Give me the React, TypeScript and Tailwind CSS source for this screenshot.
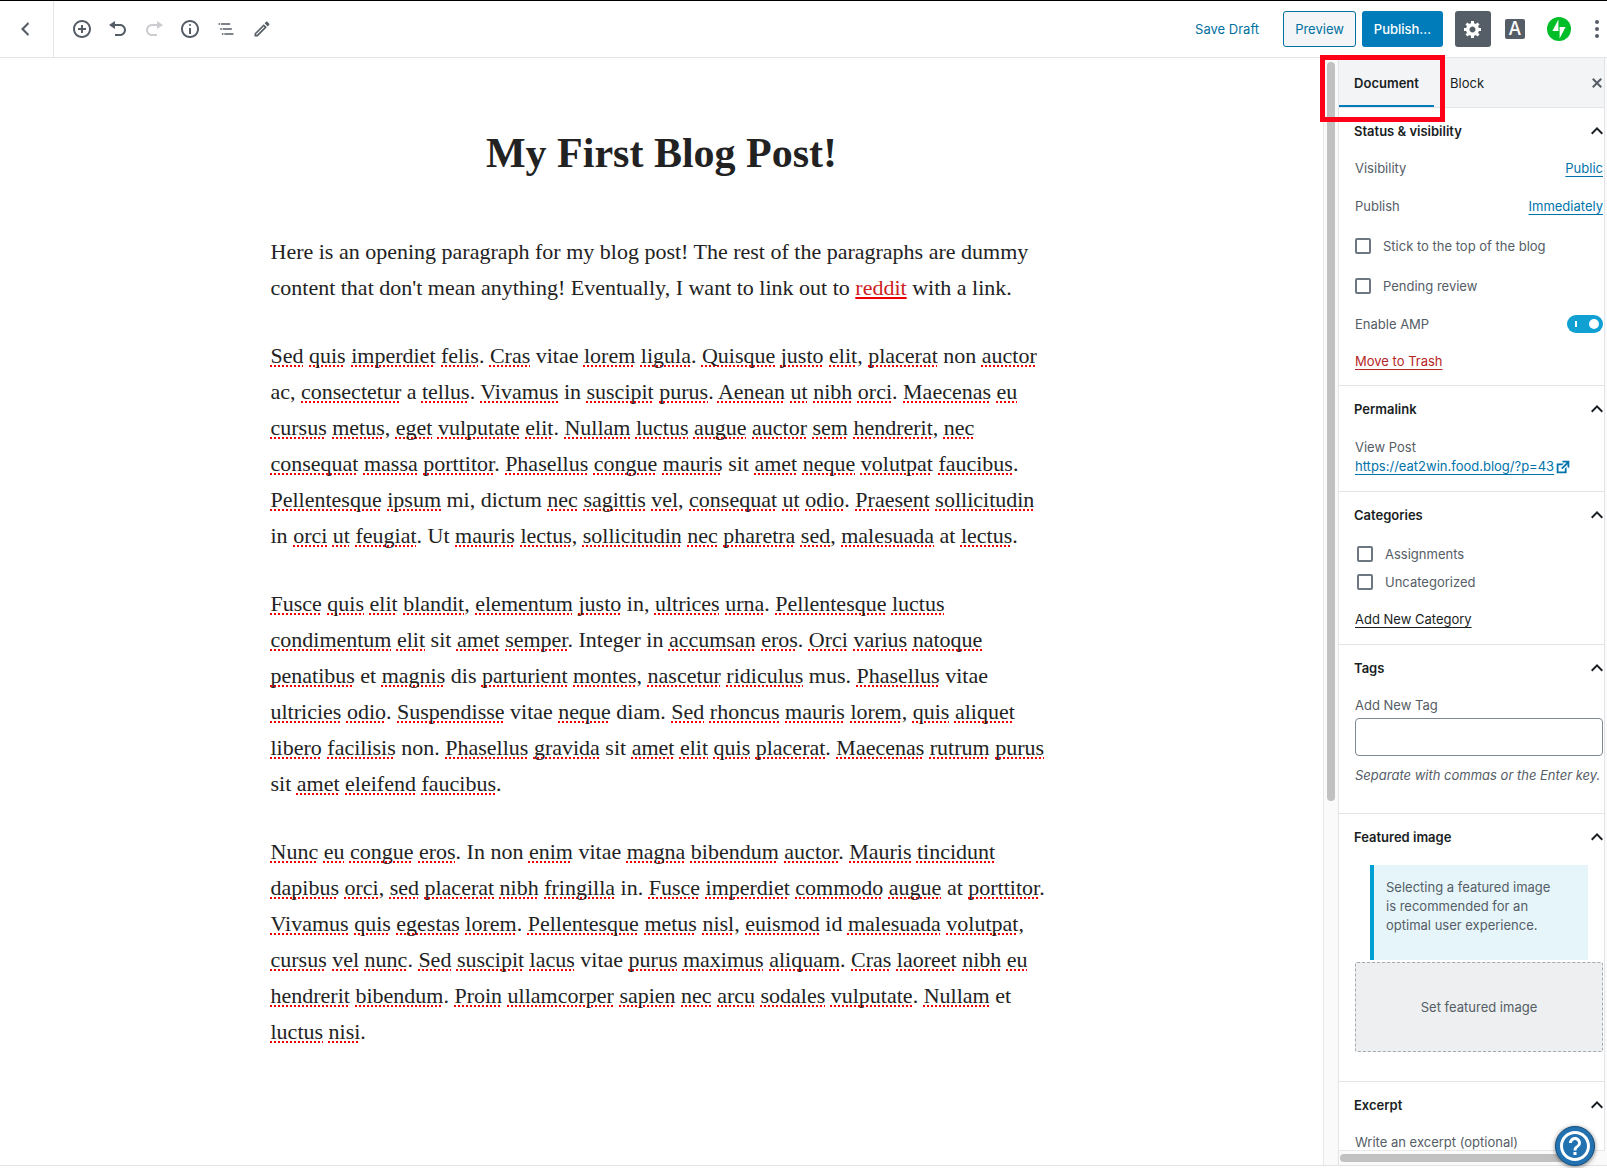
import React from "react";

const paths = {
  back: "M14 5l-5 5 5 5-1 2-7-7 7-7z",
  insert:
    "M10 1c-5 0-9 4-9 9s4 9 9 9 9-4 9-9-4-9-9-9zm0 16c-3.9 0-7-3.1-7-7s3.1-7 7-7 7 3.1 7 7-3.1 7-7 7zm1-11H9v3H6v2h3v3h2v-3h3V9h-3V6z",
  undo: "M12 5H7V2L1 6l6 4V7h5c2.2 0 4 1.8 4 4s-1.8 4-4 4H7v2h5c3.3 0 6-2.7 6-6s-2.7-6-6-6z",
  redo: "M8 5h5V2l6 4-6 4V7H8c-2.2 0-4 1.8-4 4s1.8 4 4 4h5v2H8c-3.3 0-6-2.7-6-6s2.7-6 6-6z",
  info: "M9 15h2V9H9v6zm1-10c-.5 0-1 .5-1 1s.5 1 1 1 1-.5 1-1-.5-1-1-1zm0-4c-5 0-9 4-9 9s4 9 9 9 9-4 9-9-4-9-9-9zm0 16c-3.9 0-7-3.1-7-7s3.1-7 7-7 7 3.1 7 7-3.1 7-7 7z",
  outline: "M5 5H3v2h2V5zm3 8h11v-2H8v2zm9-8H6v2h11V5zM7 11H5v2h2v-2zm0 8h2v-2H7v2zm3-2v2h11v-2H10z",
  edit: "M14.06 9.02l.92.92L5.92 19H5v-.92l9.06-9.06M17.66 3c-.25 0-.51.1-.7.29l-1.83 1.83 3.75 3.75 1.83-1.83c.39-.39.39-1.02 0-1.41l-2.34-2.34c-.2-.2-.45-.29-.71-.29zm-3.6 3.19L3 17.25V21h3.75L17.81 9.94l-3.75-3.75z",
  gear: "M18 12h-2.18c-.17.7-.44 1.35-.81 1.93l1.54 1.54-2.1 2.1-1.54-1.54c-.58.36-1.23.63-1.91.79V19H8v-2.18c-.68-.16-1.33-.43-1.91-.79l-1.54 1.54-2.12-2.12 1.54-1.54c-.36-.58-.63-1.23-.79-1.91H1V9.03h2.17c.16-.7.44-1.35.8-1.94L2.43 5.55l2.1-2.1 1.54 1.54c.58-.37 1.24-.64 1.93-.81V2h3v2.18c.68.16 1.33.43 1.91.79l1.54-1.54 2.12 2.12-1.54 1.54c.36.59.64 1.24.8 1.94H18V12zm-8.5 1.5c1.66 0 3-1.34 3-3s-1.34-3-3-3-3 1.34-3 3 1.34 3 3 3z",
  close:
    "M14.95 6.46L11.41 10l3.54 3.54-1.41 1.41L10 11.42l-3.53 3.53-1.42-1.42L8.58 10 5.05 6.47l1.42-1.42L10 8.58l3.54-3.53z",
  up: "M7.41 15.41L12 10.83l4.59 4.58L18 14l-6-6-6 6z",
  external: "M9 3h8v8l-2-1V6.92l-5.6 5.59-1.41-1.41L14.08 5H10zm3 12v-3l2-2v7H3V6h8L9 8H5v7h7z",
  help: "M11 18h2v-2h-2v2zm1-16C6.48 2 2 6.48 2 12s4.48 10 10 10 10-4.48 10-10S17.52 2 12 2zm0 18c-4.41 0-8-3.59-8-8s3.59-8 8-8 8 3.59 8 8-3.59 8-8 8zm0-14c-2.21 0-4 1.79-4 4h2c0-1.1.9-2 2-2s2 .9 2 2c0 2-3 1.75-3 5h2c0-2.25 3-2.5 3-5 0-2.21-1.79-4-4-4z",
};

function Icon({ name, box = 20, size = 20 }: { name: keyof typeof paths; box?: number; size?: number }) {
  return (
    <svg className="shrink-0" width={size} height={size} viewBox={`0 0 ${box} ${box}`} fill="currentColor" aria-hidden="true">
      <path d={paths[name]} />
    </svg>
  );
}

function ToolButton({ label, disabled, children }: { label: string; disabled?: boolean; children: React.ReactNode }) {
  return (
    <button
      type="button"
      aria-label={label}
      disabled={disabled}
      className="flex size-9 items-center justify-center text-[#555d66] disabled:text-[#cbcdd0]"
    >
      {children}
    </button>
  );
}

function Header() {
  return (
    <header className="flex shrink-0 items-stretch border-t border-b border-t-black border-b-[#e2e4e7] bg-white">
      <div className="flex w-[54px] items-center border-r border-[#e2e4e7] pl-[7px]">
        <ToolButton label="Back">
          <Icon name="back" />
        </ToolButton>
      </div>
      <div className="flex h-14 flex-1 items-center justify-between pl-[10px]">
        <div className="flex items-center">
          <ToolButton label="Add block"><Icon name="insert" /></ToolButton>
          <ToolButton label="Undo"><Icon name="undo" /></ToolButton>
          <ToolButton label="Redo" disabled><Icon name="redo" /></ToolButton>
          <ToolButton label="Content structure"><Icon name="info" /></ToolButton>
          <ToolButton label="Block navigation"><Icon name="outline" box={24} /></ToolButton>
          <ToolButton label="Edit"><Icon name="edit" box={24} /></ToolButton>
        </div>
        <div className="flex items-center">
          <button type="button" className="mr-6 pt-0.5 text-[13px] text-[#0071a1]">Save Draft</button>
          <button type="button" className="mr-1.5 h-9 w-[73px] rounded-[3px] border border-[#0071a1] bg-[#f3f5f6] pt-0.5 text-[13px] text-[#0071a1]">
            Preview
          </button>
          <button type="button" className="mr-3 h-9 w-[81px] rounded-[3px] bg-[#007cba] pt-0.5 text-[13px] font-medium text-white">
            Publish…
          </button>
          <button type="button" aria-label="Settings" className="mr-3.5 flex size-9 items-center justify-center rounded-[3px] bg-[#555d66] text-white">
            <Icon name="gear" />
          </button>
          <button type="button" className="mr-[22px] flex size-5 items-center justify-center rounded-[2px] bg-[#555d66] text-lg leading-5 font-medium text-white">
            A
          </button>
          <button type="button" aria-label="Jetpack" className="mr-6">
            <svg width="24" height="24" viewBox="0 0 32 32" aria-hidden="true">
              <circle cx="16" cy="16" r="16" fill="#00be28" />
              <path d="M15.2 18.7h-8l8-15.5zM16.8 28.8V13.3h8z" fill="#fff" />
            </svg>
          </button>
          <button type="button" aria-label="More" className="mr-2 text-[#555d66]">
            <svg width="4" height="20" viewBox="0 0 4 20" fill="currentColor" aria-hidden="true">
              <circle cx="2" cy="3" r="2" />
              <circle cx="2" cy="10" r="2" />
              <circle cx="2" cy="17" r="2" />
            </svg>
          </button>
        </div>
      </div>
    </header>
  );
}

const dictionary = new Set([
  "vitae", "non", "ac", "a", "in", "In", "sit", "mi", "dictum", "Ut", "at", "Integer", "et", "dis", "mus", "diam", "id",
]);

const paragraphs = [
  [
    "Sed quis imperdiet felis. Cras vitae lorem ligula. Quisque justo elit, placerat non auctor",
    "ac, consectetur a tellus. Vivamus in suscipit purus. Aenean ut nibh orci. Maecenas eu",
    "cursus metus, eget vulputate elit. Nullam luctus augue auctor sem hendrerit, nec",
    "consequat massa porttitor. Phasellus congue mauris sit amet neque volutpat faucibus.",
    "Pellentesque ipsum mi, dictum nec sagittis vel, consequat ut odio. Praesent sollicitudin",
    "in orci ut feugiat. Ut mauris lectus, sollicitudin nec pharetra sed, malesuada at lectus.",
  ],
  [
    "Fusce quis elit blandit, elementum justo in, ultrices urna. Pellentesque luctus",
    "condimentum elit sit amet semper. Integer in accumsan eros. Orci varius natoque",
    "penatibus et magnis dis parturient montes, nascetur ridiculus mus. Phasellus vitae",
    "ultricies odio. Suspendisse vitae neque diam. Sed rhoncus mauris lorem, quis aliquet",
    "libero facilisis non. Phasellus gravida sit amet elit quis placerat. Maecenas rutrum purus",
    "sit amet eleifend faucibus.",
  ],
  [
    "Nunc eu congue eros. In non enim vitae magna bibendum auctor. Mauris tincidunt",
    "dapibus orci, sed placerat nibh fringilla in. Fusce imperdiet commodo augue at porttitor.",
    "Vivamus quis egestas lorem. Pellentesque metus nisl, euismod id malesuada volutpat,",
    "cursus vel nunc. Sed suscipit lacus vitae purus maximus aliquam. Cras laoreet nibh eu",
    "hendrerit bibendum. Proin ullamcorper sapien nec arcu sodales vulputate. Nullam et",
    "luctus nisi.",
  ],
];

function SpellCheckedLine({ text }: { text: string }) {
  return (
    <span className="block whitespace-nowrap">
      {text.split(/([A-Za-z]+)/).map((part, i) =>
        /^[A-Za-z]+$/.test(part) && !dictionary.has(part) ? (
          <span key={i} className="underline decoration-[#f00000] decoration-dotted decoration-2 underline-offset-2 [text-decoration-skip-ink:none]">
            {part}
          </span>
        ) : (
          part
        ),
      )}
    </span>
  );
}

function Editor() {
  return (
    <main className="min-w-0 flex-1 overflow-hidden bg-white px-8 font-['Palatino','Liberation_Serif',serif] text-[#222]">
      <article className="mx-auto w-[782px] pt-[67px]">
        <h1 className="text-center text-[42px] leading-[56px] font-bold">My First Blog Post!</h1>
        <div className="mt-[53px] space-y-8 text-[22px] leading-9">
          <p>
            <span className="block whitespace-nowrap">
              Here is an opening paragraph for my blog post! The rest of the paragraphs are dummy
            </span>
            <span className="block whitespace-nowrap">
              content that don't mean anything! Eventually, I want to link out to{" "}
              <a href="#reddit" className="text-[#cd2122] underline decoration-[#f00000] decoration-2 underline-offset-2">
                reddit
              </a>{" "}
              with a link.
            </span>
          </p>
          {paragraphs.map((lines, i) => (
            <p key={i}>
              {lines.map((line) => (
                <SpellCheckedLine key={line} text={line} />
              ))}
            </p>
          ))}
        </div>
      </article>
    </main>
  );
}

function Section({ title, className, children }: { title: string; className: string; children: React.ReactNode }) {
  return (
    <section className="shrink-0 border-b border-[#e2e4e7] pr-px pl-4">
      <h2>
        <button type="button" aria-expanded="true" className="-ml-px flex h-[46px] w-[249px] items-center justify-between text-left font-semibold text-[#191e23]">
          {title}
          <span className="-mr-1.5">
            <Icon name="up" box={24} size={24} />
          </span>
        </button>
      </h2>
      <div className={className}>{children}</div>
    </section>
  );
}

function Check({ label, className }: { label: string; className: string }) {
  return (
    <label className={className}>
      <input type="checkbox" className="size-4 appearance-none rounded-[2px] border-2 border-[#6c7781] bg-white" />
      {label}
    </label>
  );
}

function Sidebar() {
  return (
    <aside className="relative flex w-[269px] shrink-0 flex-col border-l border-[#e2e4e7] bg-[#fafafa] pr-[2px] text-[13px] leading-[19px] text-[#555d66]">
      <div className="flex min-h-0 flex-1 flex-col overflow-hidden border-r border-[#e2e4e7] bg-white">
        <div className="flex h-[50px] shrink-0 items-stretch border-b border-[#e2e4e7] bg-[#f3f4f5] text-[#191e23]">
          <button type="button" className="w-[95px] border-b-2 border-[#007cba] pt-1 font-semibold">Document</button>
          <button type="button" className="ml-4 pt-0.5">Block</button>
          <button type="button" aria-label="Close settings" className="-mr-[3px] ml-auto text-[#555d66]">
            <Icon name="close" />
          </button>
        </div>

        <Section title="Status & visibility" className="flex flex-col pb-3.5">
          <div className="flex h-7 items-center justify-between">
            <span>Visibility</span>
            <button type="button" className="text-[#0073aa] underline underline-offset-3">Public</button>
          </div>
          <div className="mt-2.5 flex h-7 items-center justify-between">
            <span>Publish</span>
            <button type="button" className="text-[#0073aa] underline underline-offset-3">Immediately</button>
          </div>
          <Check label="Stick to the top of the blog" className="mt-2.5 flex h-8 items-center gap-3" />
          <Check label="Pending review" className="mt-2 flex h-8 items-center gap-3" />
          <label className="mt-2 flex h-7 items-center justify-between">
            Enable AMP
            <input
              type="checkbox"
              role="switch"
              defaultChecked
              className="flex h-[18px] w-9 appearance-none items-center justify-between rounded-full bg-[#11a0d2] pr-1 pl-2 before:h-1.5 before:w-0.5 before:bg-white after:size-2.5 after:rounded-full after:bg-white"
            />
          </label>
          <button type="button" className="mt-[13px] h-5 self-start text-[#b52727] underline underline-offset-3">Move to Trash</button>
        </Section>

        <Section title="Permalink" className="pt-1.5 pb-[15px]">
          <p>View Post</p>
          <a href="#post" className="flex items-center whitespace-nowrap text-[#0073aa]">
            <span className="underline underline-offset-3">https://eat2win.food.blog/?p=43</span>
            <Icon name="external" size={18} />
          </a>
        </Section>

        <Section title="Categories" className="pt-0.5 pb-[15px]">
          <Check label="Assignments" className="ml-0.5 flex h-7 items-center gap-3" />
          <Check label="Uncategorized" className="ml-0.5 flex h-7 items-center gap-3" />
          <button type="button" className="mt-[13px] block h-5 text-[#191e23] underline underline-offset-3">Add New Category</button>
        </Section>

        <Section title="Tags" className="pt-[5px] pb-7">
          <label htmlFor="new-tag" className="block">Add New Tag</label>
          <input id="new-tag" type="text" className="mt-[3px] block h-[38px] w-full rounded border border-[#7e8993] bg-white px-2" />
          <p className="mt-2.5 whitespace-nowrap italic">Separate with commas or the Enter key.</p>
        </Section>

        <Section title="Featured image" className="pt-[5px] pb-[29px]">
          <div className="mr-[15px] ml-[15px] border-l-4 border-[#00a0d2] bg-[#e5f5fa] pt-[13px] pr-8 pb-[25px] pl-3">
            Selecting a featured image is recommended for an optimal user experience.
          </div>
          <button type="button" className="mt-0.5 h-[90px] w-full rounded-[2px] border border-dashed border-[#a2aab2] bg-[#edeff0]">
            Set featured image
          </button>
        </Section>

        <Section title="Excerpt" className="pt-[5px] pb-4">
          <label htmlFor="excerpt" className="block">Write an excerpt (optional)</label>
          <textarea id="excerpt" className="mt-1 h-20 w-full rounded border border-[#7e8993]" />
        </Section>
      </div>
      <div className="flex h-[15px] shrink-0 items-center border-t border-[#e8e8e8] pl-px">
        <div className="h-2 w-[240px] rounded-full bg-[#c1c1c1]" />
      </div>
      <button
        type="button"
        aria-label="Help"
        className="absolute right-3 -bottom-px flex size-10 items-center justify-center rounded-full border border-[#13507f] bg-[#2271b1] text-white shadow-[0_1px_4px_rgba(0,0,0,0.5)]"
      >
        <Icon name="help" box={24} size={36} />
      </button>
      <div className="pointer-events-none absolute -top-[3px] -left-[19px] h-[67px] w-[125px] border-5 border-[#ff0019]" />
    </aside>
  );
}

export default function App() {
  return (
    <div className="flex h-screen flex-col overflow-hidden bg-white pb-[2px] font-['Inter',sans-serif]">
      <Header />
      <div className="flex min-h-0 flex-1 border-b border-[#e2e4e7]">
        <Editor />
        <div className="flex w-[15px] shrink-0 justify-center border-l border-[#e8e8e8] bg-[#fafafa] pt-1">
          <div className="h-[67%] w-2 rounded-full bg-[#c1c1c1]" />
        </div>
        <Sidebar />
      </div>
    </div>
  );
}
